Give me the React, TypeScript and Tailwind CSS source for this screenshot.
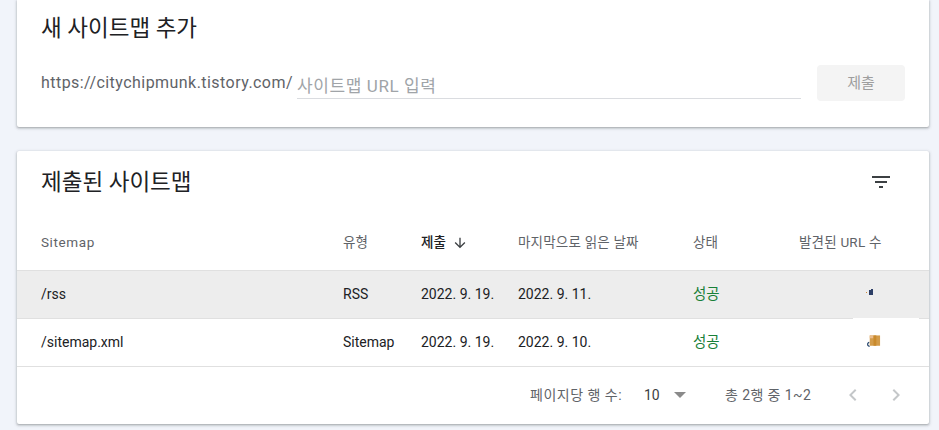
import React from 'react';

type Row = {
    path: string;
    type: string;
    submitted: string;
    lastRead: string;
    status: string;
    mark: 'blue' | 'orange';
};

const ROWS: Row[] = [
    { path: '/rss', type: 'RSS', submitted: '2022. 9. 19.', lastRead: '2022. 9. 11.', status: '성공', mark: 'blue' },
    { path: '/sitemap.xml', type: 'Sitemap', submitted: '2022. 9. 19.', lastRead: '2022. 9. 10.', status: '성공', mark: 'orange' },
];

const GRID = 'grid grid-cols-[302px_78px_97px_175px_106px_82px] items-center pl-[24px] pr-[48px]';

const FilterIcon = () => (
    <svg width="24" height="24" viewBox="0 0 24 24" className="fill-[#3c4043]">
        <path d="M10 18h4v-2h-4v2zM3 6v2h18V6H3zm3 7h12v-2H6v2z" />
    </svg>
);

const ArrowDown = () => (
    <svg width="16" height="16" viewBox="0 0 24 24" className="fill-[#3c4043]">
        <path d="M20 12l-1.41-1.41L13 16.17V4h-2v12.17l-5.58-5.59L4 12l8 8 8-8z" />
    </svg>
);

const Chevron = ({ dir }: { dir: 'left' | 'right' }) => (
    <svg width="24" height="24" viewBox="0 0 24 24" className="fill-[#c4c7c9]">
        {dir === 'left' ? (
            <path d="M15.41 7.41L14 6l-6 6 6 6 1.41-1.41L10.83 12z" />
        ) : (
            <path d="M10 6L8.59 7.41 13.17 12l-4.58 4.59L10 18l6-6z" />
        )}
    </svg>
);

// tiny favicon-like marks in the URL count column
const CountMark = ({ kind }: { kind: 'blue' | 'orange' }) =>
    kind === 'blue' ? (
        <svg width="14" height="10" viewBox="0 0 14 10" className="ml-[67px] -mt-[4px]">
            <rect x="0" y="4" width="1" height="1" fill="#d08a3a" />
            <rect x="3" y="2" width="4" height="5" fill="#2c3e66" />
            <rect x="5" y="1" width="2" height="1" fill="#2c3e66" />
        </svg>
    ) : (
        <svg width="16" height="14" viewBox="0 0 16 14" className="ml-[67px] -mt-[2px]">
            <rect x="4" y="0" width="11" height="11" fill="#d39c4a" />
            <rect x="4" y="0" width="4" height="3" fill="#ebbd8e" />
            <rect x="8" y="0" width="3" height="11" fill="#c98a2c" />
            <path d="M3.5 7.5a2 2 0 1 0 0.5 4" stroke="#2b4a70" strokeWidth="1.3" fill="none" />
        </svg>
    );

const App: React.FC = () => {
    return (
        <div className="min-h-screen w-full bg-[#f1f4fa] pl-[17px] pr-[10px] [font-family:Roboto,'Noto_Sans_CJK_KR',sans-serif] text-[#202124]">
            {/* Add sitemap card */}
            <div className="h-[127px] bg-white rounded-b-[2px] px-[24px] shadow-[0_1px_2px_rgba(60,64,67,0.3),0_1px_3px_1px_rgba(60,64,67,0.15)]">
                <h2 className="pt-[14px] text-[22.5px] leading-[28px] font-normal">새 사이트맵 추가</h2>
                <div className="mt-[23px] flex h-[36px] items-center">
                    <span className="w-[256px] shrink-0 whitespace-nowrap text-[16px] leading-[20px] tracking-[0.45px] text-[#5f6368] -mt-[1px]">
                        https://citychipmunk.tistory.com/
                    </span>
                    <input
                        className="mb-[2px] h-[26px] flex-1 self-end border-b border-[#dadce0] bg-transparent text-[17px] tracking-[0.6px] outline-none placeholder:text-[#a0a4a8]"
                        placeholder="사이트맵 URL 입력"
                    />
                    <button className="ml-[16px] h-[36px] w-[88px] rounded-[4px] bg-[#f4f4f4] text-[15px] text-[#9e9e9e]">제출</button>
                </div>
            </div>

            {/* Submitted sitemaps card */}
            <div className="mt-[24px] h-[273px] bg-white rounded-[2px] shadow-[0_1px_2px_rgba(60,64,67,0.3),0_1px_3px_1px_rgba(60,64,67,0.15)] flex flex-col">
                <div className="flex h-[64px] items-center justify-between pl-[24px] pr-[36px]">
                    <h2 className="text-[22.5px] leading-[28px] font-normal -mt-[2px]">제출된 사이트맵</h2>
                    <div className="-mt-[2px]">
                        <FilterIcon />
                    </div>
                </div>

                <div className={`${GRID} h-[56px] border-b border-[#e0e0e0] text-[13.5px] text-[#5f6368]`}>
                    <span className="tracking-[0.6px]">Sitemap</span>
                    <span>유형</span>
                    <span className="flex items-center text-[#202124] font-medium">
                        제출
                        <span className="ml-[6px]"><ArrowDown /></span>
                    </span>
                    <span className="tracking-[0.2px]">마지막으로 읽은 날짜</span>
                    <span>상태</span>
                    <span className="text-right tracking-[0.2px] whitespace-nowrap">발견된 URL 수</span>
                </div>

                {ROWS.map((r, i) => (
                    <div
                        key={r.path}
                        className={`${GRID} relative h-[48px] border-b border-[#e0e0e0] text-[14px] text-[#202124] ${i === 0 ? 'bg-[#ededed]' : 'bg-white'}`}
                    >
                        <span>{r.path}</span>
                        <span>{r.type}</span>
                        <span>{r.submitted}</span>
                        <span>{r.lastRead}</span>
                        <span className="text-[14.5px] text-[#188038]">{r.status}</span>
                        <span className="flex items-center">
                            <CountMark kind={r.mark} />
                        </span>
                        {i === 1 && <div className="absolute left-[836px] -top-[1px] h-[1px] w-[66px] bg-white" />}
                    </div>
                ))}

                <div className="flex h-[56px] items-center pl-[513px] text-[14px] text-[#5f6368]">
                    <span className="w-[93px] whitespace-nowrap tracking-[0.5px]">페이지당 행 수:</span>
                    <span className="ml-[21px] w-[15px] text-[14px] text-[#3c4043]">10</span>
                    <svg width="12" height="6" viewBox="0 0 12 6" className="ml-[15px] fill-[#8a8a8a]">
                        <path d="M0 0h12L6 6z" />
                    </svg>
                    <span className="ml-[39px] w-[84px] whitespace-nowrap tracking-[0.4px]">총 2행 중 1~2</span>
                    <span className="ml-[32px]"><Chevron dir="left" /></span>
                    <span className="ml-[19px]"><Chevron dir="right" /></span>
                </div>
            </div>
        </div>
    );
};

export default App;
